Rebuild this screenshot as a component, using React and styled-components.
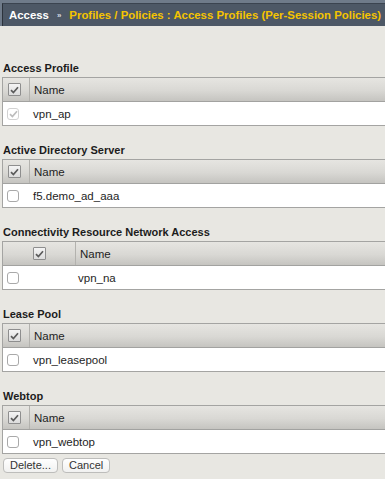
import React from 'react';
import styled, { createGlobalStyle } from 'styled-components';

const GlobalStyle = createGlobalStyle`
  html, body {
    margin: 0;
    padding: 0;
    background: #e8e7e2;
    font-family: "Liberation Sans", Arial, Helvetica, sans-serif;
    overflow: hidden;
  }
`

const Page = styled.div`
  width: 385px;
  height: 479px;
  overflow: hidden;
  background: #e8e7e2;
`

const TopBand = styled.div`
  height: 26px;
  padding: 3px 0 0 2px;
  box-sizing: border-box;
  background: #6f7b8a;
`

const Breadcrumb = styled.div`
  height: 23px;
  box-sizing: border-box;
  display: flex;
  align-items: center;
  gap: 6px;
  padding-left: 6px;
  background: #4d5866;
  border-top: 1px solid #3b4450;
  border-left: 1px solid #2c333c;
  white-space: nowrap;
  font-size: 11.4px;
  font-weight: bold;
`

const Crumb = styled.span`
  color: ${p => (p.$current ? '#f5c400' : '#ffffff')};
`

const Sep = styled.span`
  color: #d8dde3;
  font-size: 8px;
  padding: 0 2px;
`

const Content = styled.div`
  display: flex;
  flex-direction: column;
  gap: 16px;
  padding: 34px 0 0 2px;
`

const Section = styled.section`
  display: flex;
  flex-direction: column;
`

const Title = styled.div`
  height: 17px;
  line-height: 17px;
  padding-left: 1px;
  font-size: 11px;
  font-weight: bold;
  color: #1c1c1c;
`

const Table = styled.div`
  width: 430px;
  border: 1px solid #a4a4a2;
  background: #ffffff;
`

const HeadRow = styled.div`
  display: flex;
  height: 23px;
  border-bottom: 1px solid #a2a2a0;
  background: linear-gradient(#e6e5e1, #d9d8d4 55%, #c5c4c0);
`

const Row = styled.div`
  display: flex;
  height: 23px;
  background: #ffffff;
`

const CheckCell = styled.div`
  width: ${p => p.$w}px;
  flex: none;
  display: flex;
  align-items: center;
  justify-content: ${p => (p.$center ? 'center' : 'flex-start')};
  padding-left: ${p => (p.$center ? 0 : p.$pad)}px;
  box-sizing: border-box;
  border-right: ${p => (p.$divider ? '1px solid #b3b2ae' : '1px solid transparent')};
`

const NameCell = styled.div`
  display: flex;
  align-items: center;
  padding-left: ${p => p.$pad}px;
  font-size: 11.5px;
  color: #1e1e1e;
`

const Box = styled.span`
  width: ${p => p.$size}px;
  height: ${p => p.$size}px;
  box-sizing: border-box;
  display: flex;
  align-items: center;
  justify-content: center;
  border: 1px solid ${p => p.$border};
  border-radius: ${p => (p.$round ? 3 : 1)}px;
  background: ${p => p.$bg};
`

const Actions = styled.div`
  display: flex;
  gap: 4px;
  margin-top: -12px;
  padding-left: 1px;
`

const Button = styled.button`
  height: 15px;
  padding: 0 6px;
  font-family: "Liberation Sans", Arial, sans-serif;
  font-size: 11px;
  color: #333333;
  line-height: 13px;
  background: linear-gradient(#ffffff, #f1f1f0);
  border: 1px solid #bdbdbb;
  border-radius: 4px;
`

const Check = ({ color }) => (
  <svg width="9" height="8" viewBox="0 0 9 8">
    <path d="M1 4.2 L3.4 6.6 L8 1.2" fill="none" stroke={color} strokeWidth="1.7" />
  </svg>
)

const HeadBox = () => (
  <Box $size={13} $border="#8e8e8e" $bg="linear-gradient(#f4f4f4, #dcdcdc)">
    <Check color="#5b5b5b" />
  </Box>
)

const RowBox = ({ checked }) => (
  <Box $size={12} $round $border={checked ? '#d2d2d2' : '#a9a9a9'} $bg="#ffffff">
    {checked && <Check color="#bdbdbd" />}
  </Box>
)

const sections = [
  { title: 'Access Profile', item: 'vpn_ap', checked: true },
  { title: 'Active Directory Server', item: 'f5.demo_ad_aaa' },
  { title: 'Connectivity Resource Network Access', item: 'vpn_na', wide: true },
  { title: 'Lease Pool', item: 'vpn_leasepool' },
  { title: 'Webtop', item: 'vpn_webtop' },
]

export default function App() {
  return (
    <Page>
      <GlobalStyle />
      <TopBand>
        <Breadcrumb>
          <Crumb>Access</Crumb>
          <Sep>»</Sep>
          <Crumb $current>Profiles / Policies : Access Profiles (Per-Session Policies)</Crumb>
        </Breadcrumb>
      </TopBand>
      <Content>
        {sections.map(s => (
          <Section key={s.title}>
            <Title>{s.title}</Title>
            <Table>
              <HeadRow>
                <CheckCell $w={s.wide ? 73 : 27} $center={s.wide} $pad={5} $divider>
                  <HeadBox />
                </CheckCell>
                <NameCell $pad={4}>Name</NameCell>
              </HeadRow>
              <Row>
                <CheckCell $w={s.wide ? 73 : 27} $pad={4}>
                  <RowBox checked={s.checked} />
                </CheckCell>
                <NameCell $pad={s.wide ? 2 : 3}>{s.item}</NameCell>
              </Row>
            </Table>
          </Section>
        ))}
        <Actions>
          <Button>Delete...</Button>
          <Button>Cancel</Button>
        </Actions>
      </Content>
    </Page>
  )
}
